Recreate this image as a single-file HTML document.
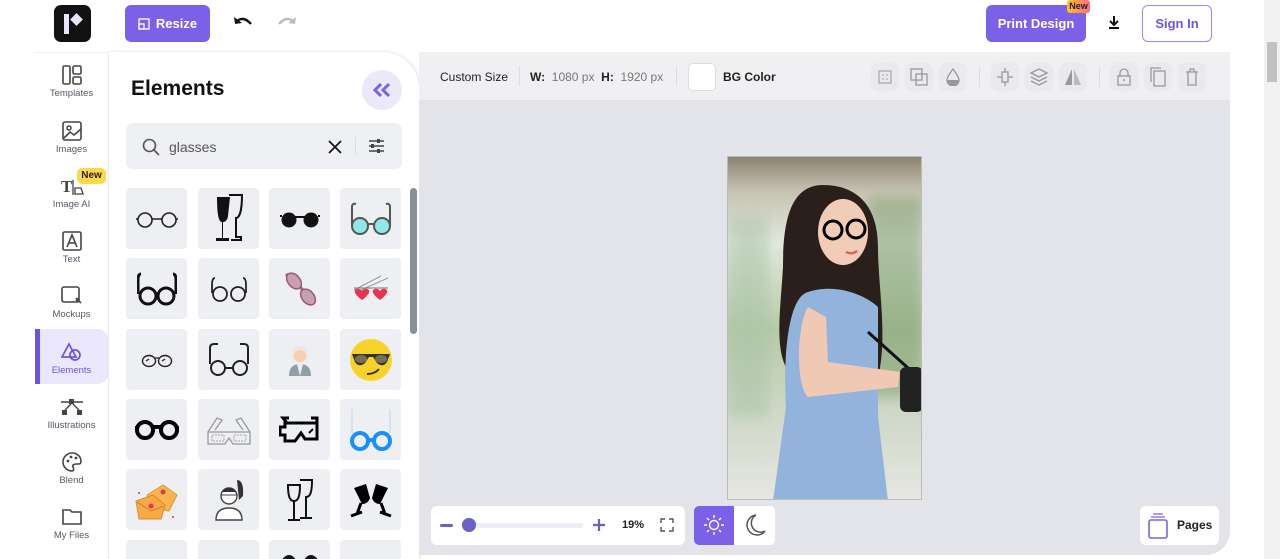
<!DOCTYPE html>
<html><head><meta charset="utf-8"><style>
*{box-sizing:border-box;margin:0;padding:0}
html{width:1280px;height:559px;overflow:hidden}
body{width:1280px;height:559px;overflow:hidden;background:#fff;font-family:"Liberation Sans",sans-serif;position:relative}
.abs{position:absolute}
.btn{position:absolute;border-radius:6px;display:flex;align-items:center;justify-content:center;font-weight:bold;font-size:13px}
.nav{position:absolute;left:35px;width:73px;text-align:center;font-size:9.5px;color:#555a66}
.nav svg{display:block;margin:0 auto 3px}
.cell{position:absolute;width:61px;height:61px;background:#eeeff3;border-radius:4px;display:flex;align-items:center;justify-content:center}
.tb{position:absolute;top:64px;width:26px;height:26px;border-radius:6px;background:#e9e9ee;box-shadow:0 0 2px #ddd;display:flex;align-items:center;justify-content:center}
</style></head><body>
<div class="abs" style="left:0;top:0;width:1280px;height:559px;overflow:hidden">
<!-- top bar -->
<div class="abs" style="left:54px;top:5px;width:37px;height:37px;background:#111;border-radius:7px"></div>
<div class="abs" style="left:64px;top:14px;width:5px;height:20px;background:#e8e4ff"></div>
<div class="abs" style="left:72px;top:15px;width:9px;height:9px;background:#e8e4ff;transform:rotate(45deg)"></div>
<div class="btn" style="left:125px;top:5px;width:85px;height:37px;background:#7b61e8;color:#fff">
<svg width="12" height="12" style="margin-right:6px"><rect x="1" y="1" width="10" height="10" fill="none" stroke="#fff" stroke-width="1.3"/><rect x="1" y="6" width="5" height="5" fill="none" stroke="#fff" stroke-width="1.3"/></svg>Resize</div>
<svg class="abs" style="left:232px;top:14px" width="22" height="16"><path d="M4 8 Q11 1 19 10" fill="none" stroke="#111" stroke-width="2.4"/><path d="M2 3 L3 10 L10 9" fill="#111"/></svg>
<svg class="abs" style="left:276px;top:14px" width="22" height="16"><path d="M18 8 Q11 1 3 10" fill="none" stroke="#bbb" stroke-width="2.4"/><path d="M20 3 L19 10 L12 9" fill="#bbb"/></svg>
<div class="btn" style="left:986px;top:5px;width:100px;height:37px;background:#7b61e8;color:#fff">Print Design</div>
<div class="abs" style="left:1067px;top:0;width:23px;height:13px;background:linear-gradient(90deg,#ffc21a,#ff6a8a);border-radius:3px;font-size:9px;font-weight:bold;text-align:center;line-height:13px;color:#222">New</div>
<svg class="abs" style="left:1107px;top:15px" width="14" height="16"><path d="M7 1 V10 M3 6 L7 10 L11 6 M2 13 H12" fill="none" stroke="#111" stroke-width="2"/></svg>
<div class="btn" style="left:1142px;top:5px;width:70px;height:37px;border:1.5px solid #9b87f0;color:#6c54e0">Sign In</div>
<!-- right scrollbar -->
<div class="abs" style="left:1264px;top:0;width:16px;height:559px;background:#f1f1f1"></div>
<div class="abs" style="left:1267px;top:42px;width:10px;height:40px;background:#c1c1c1"></div>
<!-- sidebar -->
<div class="abs" style="left:35px;top:52px;width:74px;height:507px;background:#fff;border-top:1px solid #eee;border-right:1px solid #eee"></div>
<div class="abs" style="left:35px;top:329px;width:74px;height:55px;background:#ebe7fd;border-radius:0 12px 12px 0;border-left:5px solid #6c54e0"></div>
<div class="nav" style="top:65px"><svg width="20" height="20"><rect x="1" y="1" width="7" height="18" rx="1.5" fill="none" stroke="#444" stroke-width="1.6"/><rect x="11" y="1" width="8" height="8" rx="1.5" fill="none" stroke="#444" stroke-width="1.6"/><rect x="11" y="12" width="8" height="7" rx="1.5" fill="none" stroke="#444" stroke-width="1.6"/></svg>Templates</div>
<div class="nav" style="top:121px"><svg width="20" height="20"><rect x="1" y="1" width="18" height="18" rx="2" fill="none" stroke="#444" stroke-width="1.6"/><circle cx="7" cy="7" r="2" fill="none" stroke="#444" stroke-width="1.5"/><path d="M2 17 L8 11 L12 14 L19 8" fill="none" stroke="#444" stroke-width="1.6"/></svg>Images</div>
<div class="nav" style="top:176px"><svg width="26" height="20"><text x="2" y="16" font-family="Liberation Serif" font-weight="bold" font-size="17" fill="#444">T</text><path d="M14 4 V19 M16 12 L22 12 L24 18 L16 18Z" fill="none" stroke="#444" stroke-width="1.3"/></svg>Image AI</div>
<div class="abs" style="left:77px;top:168px;width:29px;height:16px;background:#ffd84a;border-radius:5px;font-size:10px;font-weight:bold;text-align:center;line-height:16px;color:#222">New</div>
<div class="nav" style="top:231px"><svg width="20" height="20"><rect x="1" y="1" width="18" height="18" rx="1.5" fill="none" stroke="#444" stroke-width="1.6"/><path d="M5 16 L10 4 L15 16 M7 12 H13" fill="none" stroke="#444" stroke-width="1.6"/></svg>Text</div>
<div class="nav" style="top:286px"><svg width="22" height="20"><rect x="1" y="1" width="17" height="15" rx="2" fill="none" stroke="#444" stroke-width="1.6"/><path d="M15 12 L20 17 M18 12 L15 15" stroke="#444" stroke-width="1.6"/></svg>Mockups</div>
<div class="nav" style="top:342px;color:#6c54e0"><svg width="22" height="20"><path d="M8 2 L15 15 H1Z" fill="none" stroke="#6c54e0" stroke-width="1.7"/><circle cx="14" cy="13" r="5" fill="none" stroke="#6c54e0" stroke-width="1.7"/></svg>Elements</div>
<div class="nav" style="top:397px"><svg width="24" height="20"><rect x="9" y="2" width="5" height="5" fill="#444"/><rect x="2" y="13" width="5" height="5" fill="#444"/><rect x="17" y="13" width="5" height="5" fill="#444"/><path d="M1 5 H23 M11 7 L5 13 M13 7 L19 13" stroke="#444" stroke-width="1.4"/></svg>Illustrations</div>
<div class="nav" style="top:452px"><svg width="20" height="20"><path d="M10 1 A9 9 0 1 0 10 19 C12 19 12 16 11 15 C10 13 12 12 14 12 H17 C19 12 19 10 19 9 A9 8 0 0 0 10 1Z" fill="none" stroke="#444" stroke-width="1.6"/><circle cx="6" cy="9" r="1.4" fill="#444"/><circle cx="9" cy="5" r="1.4" fill="#444"/><circle cx="14" cy="6" r="1.4" fill="#444"/></svg>Blend</div>
<div class="nav" style="top:507px"><svg width="20" height="20"><path d="M1 3 H8 L10 5 H19 V17 H1Z" fill="none" stroke="#444" stroke-width="1.6"/></svg>My Files</div>
<!-- panel -->
<div class="abs" style="left:109px;top:52px;width:310px;height:507px;background:#fff;border-radius:0 36px 0 0;box-shadow:1px 0 3px #ddd"></div>
<div class="abs" style="left:131px;top:77px;font-size:21px;font-weight:bold;color:#111">Elements</div>
<div class="abs" style="left:362px;top:70px;width:40px;height:40px;border-radius:50%;background:#ebe8fa"></div>
<svg class="abs" style="left:372px;top:82px" width="20" height="16"><path d="M9 2 L3 8 L9 14 M17 2 L11 8 L17 14" fill="none" stroke="#7b61e8" stroke-width="3"/></svg>
<div class="abs" style="left:126px;top:123px;width:276px;height:46px;background:#eff0f3;border-radius:6px"></div>
<svg class="abs" style="left:142px;top:138px" width="18" height="18"><circle cx="7.5" cy="7.5" r="6" fill="none" stroke="#555" stroke-width="1.6"/><path d="M12 12 L17 17" stroke="#555" stroke-width="1.6"/></svg>
<div class="abs" style="left:169px;top:139px;font-size:14px;color:#555">glasses</div>
<svg class="abs" style="left:328px;top:140px" width="14" height="14"><path d="M1 1 L13 13 M13 1 L1 13" stroke="#111" stroke-width="1.7"/></svg>
<div class="abs" style="left:355px;top:137px;width:1px;height:18px;background:#ddd"></div>
<svg class="abs" style="left:368px;top:138px" width="17" height="16"><path d="M1 3 H16 M1 8 H16 M1 13 H16" stroke="#444" stroke-width="1.4"/><rect x="9" y="1" width="3" height="4" fill="#444"/><rect x="3" y="6" width="3" height="4" fill="#444"/><rect x="9" y="11" width="3" height="4" fill="#444"/></svg>
<div class="abs" style="left:410px;top:188px;width:7px;height:146px;background:#8a8f99;border-radius:4px"></div>
<!-- grid -->
<div class="cell" style="left:126px;top:188px"><svg width="44" height="20"><circle cx="10" cy="11" r="7" fill="none" stroke="#222" stroke-width="1.6"/><circle cx="34" cy="11" r="7" fill="none" stroke="#222" stroke-width="1.6"/><path d="M17 10 H27 M3 10 H1 M41 10 H43" stroke="#222" stroke-width="1.6"/></svg></div>
<div class="cell" style="left:198px;top:188px"><svg width="30" height="50"><path d="M3 3 H16 L14 22 C13 28 10 28 9 28 V44 H15 V47 H2 V44 H8 V28 C5 28 3 22 3 3Z" fill="#111"/><path d="M15 1 H28 C28 18 25 24 22 24 V43 H27 V46 H17" fill="none" stroke="#111" stroke-width="2"/></svg></div>
<div class="cell" style="left:269px;top:188px"><svg width="42" height="18"><circle cx="10" cy="10" r="7.5" fill="#111"/><circle cx="32" cy="10" r="7.5" fill="#111"/><path d="M16 7 H26 M1 6 H3 M39 6 H41" stroke="#111" stroke-width="2"/></svg></div>
<div class="cell" style="left:340px;top:188px"><svg width="48" height="40"><circle cx="13" cy="27" r="8" fill="#8fe7ea" stroke="#555" stroke-width="2"/><circle cx="35" cy="27" r="8" fill="#8fe7ea" stroke="#555" stroke-width="2"/><path d="M21 25 H27 M5 27 V8 Q5 4 9 5 M43 27 V8 Q43 4 39 5" fill="none" stroke="#555" stroke-width="2"/></svg></div>
<div class="cell" style="left:126px;top:258px"><svg width="40" height="34"><path d="M4 2 Q1 2 1 8 V22 M36 2 Q39 2 39 8 V22" fill="none" stroke="#111" stroke-width="3"/><circle cx="11" cy="24" r="8" fill="none" stroke="#111" stroke-width="3"/><circle cx="29" cy="24" r="8" fill="none" stroke="#111" stroke-width="3"/><path d="M18 22 H22" stroke="#111" stroke-width="3"/></svg></div>
<div class="cell" style="left:198px;top:258px"><svg width="38" height="28"><path d="M5 3 Q2 3 2 10 V18 M33 3 Q36 3 36 10 V18" fill="none" stroke="#222" stroke-width="1.8"/><circle cx="10" cy="19" r="7" fill="none" stroke="#222" stroke-width="1.8"/><circle cx="28" cy="19" r="7" fill="none" stroke="#222" stroke-width="1.8"/></svg></div>
<div class="cell" style="left:269px;top:258px"><svg width="40" height="40"><path d="M6 5 L22 20 L32 36" stroke="#9a6a7a" stroke-width="3" fill="none"/><ellipse cx="14" cy="12" rx="6" ry="9" transform="rotate(-40 14 12)" fill="#c9a0b0" stroke="#9a5a70" stroke-width="1.5"/><ellipse cx="28" cy="28" rx="6" ry="9" transform="rotate(-40 28 28)" fill="#c9a0b0" stroke="#9a5a70" stroke-width="1.5"/></svg></div>
<div class="cell" style="left:340px;top:258px"><svg width="40" height="30"><path d="M3 16 L30 2 M10 16 L37 4" stroke="#999" stroke-width="1"/><path d="M3 14 H37" stroke="#777"/><path d="M11 26 C3 20 2 16 6 15 C9 14 11 17 11 17 C11 17 13 14 16 15 C20 16 19 20 11 26Z M29 26 C21 20 20 16 24 15 C27 14 29 17 29 17 C29 17 31 14 34 15 C38 16 37 20 29 26Z" fill="#e8334f"/></svg></div>
<div class="cell" style="left:126px;top:329px"><svg width="32" height="16"><ellipse cx="8" cy="9" rx="6.5" ry="5.5" fill="none" stroke="#222" stroke-width="1.4"/><ellipse cx="24" cy="9" rx="6.5" ry="5.5" fill="none" stroke="#222" stroke-width="1.4"/><path d="M14 6 H18 M5 9 L8 7 M21 9 L24 7" stroke="#222" stroke-width="1.2"/></svg></div>
<div class="cell" style="left:198px;top:329px"><svg width="44" height="36"><path d="M7 2 Q3 2 3 6 V22 M37 2 Q41 2 41 6 V22" fill="none" stroke="#222" stroke-width="2"/><path d="M7 2 H11 M37 2 H33" stroke="#222" stroke-width="2"/><circle cx="11" cy="26" r="7" fill="none" stroke="#222" stroke-width="2"/><circle cx="33" cy="26" r="7" fill="none" stroke="#222" stroke-width="2"/><path d="M18 26 H26" stroke="#222" stroke-width="2"/></svg></div>
<div class="cell" style="left:269px;top:329px"><svg width="30" height="36"><circle cx="15" cy="12" r="8" fill="#f0e5df"/><circle cx="15" cy="14" r="6" fill="#f4cfb0"/><path d="M4 34 Q4 22 15 22 Q26 22 26 34Z" fill="#8fa0a6"/><path d="M12 22 L15 34 L18 22" fill="#eee"/></svg></div>
<div class="cell" style="left:340px;top:329px"><svg width="44" height="44"><circle cx="22" cy="22" r="21" fill="#f7d32a"/><path d="M3 16 H41 L38 24 Q34 30 28 25 L24 19 H20 L16 25 Q10 30 6 24Z" fill="#333"/><ellipse cx="12" cy="21" rx="6" ry="4" fill="#7a6e52"/><ellipse cx="32" cy="21" rx="6" ry="4" fill="#7a6e52"/><path d="M18 36 Q26 36 30 31" fill="none" stroke="#333" stroke-width="2"/></svg></div>
<div class="cell" style="left:126px;top:399px"><svg width="46" height="22"><circle cx="11" cy="11" r="8" fill="none" stroke="#000" stroke-width="4"/><circle cx="35" cy="11" r="8" fill="none" stroke="#000" stroke-width="4"/><path d="M18 8 H28 M1 9 H3 M43 9 H45" stroke="#000" stroke-width="4"/></svg></div>
<div class="cell" style="left:198px;top:399px"><svg width="48" height="36"><path d="M3 20 L12 6 L17 8 L10 18 M45 20 L36 6 L31 8 L38 18 M3 20 H45 V32 H28 L24 26 L20 32 H3Z" fill="none" stroke="#999" stroke-width="1.3"/><rect x="7" y="23" width="12" height="6" fill="none" stroke="#aaa" stroke-dasharray="2 1"/><rect x="29" y="23" width="12" height="6" fill="none" stroke="#aaa" stroke-dasharray="2 1"/></svg></div>
<div class="cell" style="left:269px;top:399px"><svg width="42" height="30"><path d="M10 3 H4 L8 8 M32 3 H38 V24 H26 L22 18 L16 26 H6 V20 H1 V12 H6 V8 H38" fill="none" stroke="#000" stroke-width="3"/><path d="M30 18 L34 14" stroke="#000" stroke-width="2"/></svg></div>
<div class="cell" style="left:340px;top:399px"><svg width="46" height="46"><path d="M4 2 V26 M42 2 V26" stroke="#d6e0f0" stroke-width="2"/><circle cx="12" cy="34" r="8" fill="none" stroke="#1a90ff" stroke-width="4"/><circle cx="34" cy="34" r="8" fill="none" stroke="#1a90ff" stroke-width="4"/><path d="M20 33 H26" stroke="#1a90ff" stroke-width="4"/></svg></div>
<div class="cell" style="left:126px;top:469px"><svg width="44" height="42"><path d="M12 16 L28 6 L42 16 L34 32 L16 28Z" fill="#f8b64c" stroke="#e0962e"/><path d="M1 22 L18 16 L30 26 L26 40 L4 40Z" fill="#f9a846" stroke="#e08a2e"/><path d="M2 23 L16 32 L29 27" fill="none" stroke="#d0802a"/><circle cx="16" cy="27" r="2.5" fill="#e8334f"/><circle cx="28" cy="13" r="2.5" fill="#e8334f"/><circle cx="4" cy="14" r="1" fill="#e8334f"/><circle cx="38" cy="38" r="1" fill="#e8334f"/></svg></div>
<div class="cell" style="left:198px;top:469px"><svg width="32" height="44"><path d="M24 2 Q31 2 30 18 L26 22Z" fill="#333"/><circle cx="16" cy="18" r="8" fill="#fff" stroke="#444" stroke-width="1.4"/><path d="M8 14 Q16 6 24 14 Z" fill="#333"/><path d="M3 42 Q3 30 16 30 Q29 30 29 42Z" fill="#fff" stroke="#444" stroke-width="1.4"/><path d="M8 17 H24" stroke="#444"/></svg></div>
<div class="cell" style="left:269px;top:469px"><svg width="30" height="46"><path d="M3 8 H15 C15 20 13 24 9 24 C5 24 3 20 3 8Z M9 24 V42 M3 43 H15 M15 3 H27 C27 16 25 20 21 20 V40 M15 41 H27" fill="none" stroke="#111" stroke-width="2"/></svg></div>
<div class="cell" style="left:340px;top:469px"><svg width="46" height="40"><path d="M6 8 L18 4 L22 18 Q20 24 14 24 Z M40 8 L28 4 L24 18 Q26 24 32 24Z" fill="#000"/><path d="M13 23 L9 34 M3 36 L14 32 M33 23 L37 34 M43 36 L32 32" stroke="#000" stroke-width="3"/></svg></div>
<div class="cell" style="left:126px;top:540px;height:19px;border-radius:4px 4px 0 0"></div><div class="cell" style="left:198px;top:540px;height:19px;border-radius:4px 4px 0 0"></div><div class="cell" style="left:269px;top:540px;height:19px;border-radius:4px 4px 0 0;align-items:flex-start"><svg width="40" height="19" style="margin-top:8px"><path d="M3 14 Q9 4 15 14 M25 14 Q31 4 37 14" stroke="#111" stroke-width="4" fill="none"/></svg></div><div class="cell" style="left:340px;top:540px;height:19px;border-radius:4px 4px 0 0"></div>
<!-- canvas -->
<div class="abs" style="left:419px;top:52px;width:811px;height:503px;background:#e3e4e9;border-radius:0 0 24px 0"></div>
<div class="abs" style="left:419px;top:52px;width:811px;height:48px;background:#f0f0f3"></div>
<div class="abs" style="left:440px;top:70px;font-size:12px;color:#222">Custom Size</div>
<div class="abs" style="left:519px;top:66px;width:1px;height:20px;background:#ddd"></div>
<div class="abs" style="left:530px;top:70px;font-size:12px;color:#777"><b style="color:#222">W:</b>&nbsp; 1080 px &nbsp;<b style="color:#222">H:</b>&nbsp; 1920 px</div>
<div class="abs" style="left:676px;top:66px;width:1px;height:20px;background:#ddd"></div>
<div class="abs" style="left:688px;top:63px;width:28px;height:28px;background:#fff;border:1px solid #ddd;border-radius:5px"></div>
<div class="abs" style="left:723px;top:70px;font-size:12px;font-weight:bold;color:#222">BG Color</div>
<div class="tb" style="left:872px"><svg width="14" height="14"><rect x="1" y="1" width="12" height="12" fill="none" stroke="#999"/><circle cx="5" cy="5" r=".8" fill="#999"/><circle cx="9" cy="9" r=".8" fill="#999"/><circle cx="5" cy="9" r=".8" fill="#999"/><circle cx="9" cy="5" r=".8" fill="#999"/></svg></div>
<div class="tb" style="left:906px"><svg width="18" height="18"><rect x="1" y="1" width="11" height="11" fill="none" stroke="#999" stroke-width="1.3"/><rect x="6" y="6" width="11" height="11" fill="none" stroke="#999" stroke-width="1.3"/></svg></div>
<div class="tb" style="left:940px"><svg width="14" height="18"><path d="M7 1 Q1 9 1 12 A6 6 0 0 0 13 12 Q13 9 7 1Z" fill="none" stroke="#999" stroke-width="1.3"/><path d="M1 12 A6 6 0 0 0 13 12Z" fill="#999"/></svg></div>
<div class="abs" style="left:979px;top:67px;width:1px;height:20px;background:#ddd"></div>
<div class="tb" style="left:992px"><svg width="18" height="20"><path d="M9 1 V19 M1 10 H17" stroke="#999" stroke-width="1.3"/><rect x="6" y="5" width="6" height="10" fill="#e9e9ee" stroke="#999" stroke-width="1.3"/></svg></div>
<div class="tb" style="left:1026px"><svg width="18" height="18"><path d="M9 1 L17 5 L9 9 L1 5Z M1 9 L9 13 L17 9 M1 13 L9 17 L17 13" fill="none" stroke="#999" stroke-width="1.3"/></svg></div>
<div class="tb" style="left:1060px"><svg width="18" height="18"><path d="M8 1 V17 H1Z" fill="#999"/><path d="M10 1 V17 H17Z" fill="#bbb"/></svg></div>
<div class="abs" style="left:1099px;top:67px;width:1px;height:20px;background:#ddd"></div>
<div class="tb" style="left:1111px"><svg width="14" height="18"><path d="M3 8 V5 A4 4 0 0 1 11 5 V8" fill="none" stroke="#999" stroke-width="1.3"/><rect x="1" y="8" width="12" height="9" fill="none" stroke="#999" stroke-width="1.3"/><circle cx="7" cy="12" r="1" fill="#999"/></svg></div>
<div class="tb" style="left:1145px"><svg width="16" height="20"><rect x="4" y="4" width="11" height="15" fill="none" stroke="#999" stroke-width="1.3"/><path d="M1 15 V1 H11" fill="none" stroke="#999" stroke-width="1.3"/></svg></div>
<div class="tb" style="left:1179px"><svg width="14" height="18"><path d="M1 4 H13 M5 4 V1 H9 V4 M3 4 V17 H11 V4" fill="none" stroke="#999" stroke-width="1.3"/></svg></div>
<!-- photo -->
<svg class="abs" style="left:727px;top:156px;border:1px solid #bbb;background:#d8e0d2" width="195" height="344">
<defs><linearGradient id="bg" x1="0" y1="0" x2="0" y2="1"><stop offset="0" stop-color="#8d8272"/><stop offset=".1" stop-color="#c7c3b2"/><stop offset=".25" stop-color="#dfe8dc"/><stop offset=".5" stop-color="#b7caa8"/><stop offset=".75" stop-color="#cfd8c8"/><stop offset="1" stop-color="#e6e7e2"/></linearGradient>
<filter id="b"><feGaussianBlur stdDeviation="6"/></filter></defs>
<rect width="195" height="344" fill="url(#bg)"/>
<rect x="140" y="40" width="55" height="200" fill="#7d9a6b" opacity=".5" filter="url(#b)"/>
<rect x="0" y="60" width="40" height="200" fill="#a9c3a6" opacity=".5" filter="url(#b)"/>
<path d="M95 28 C60 28 55 70 55 110 C52 160 45 200 65 220 L150 220 C160 180 150 130 150 90 C150 50 130 28 95 28Z" fill="#2a1f1a"/>
<ellipse cx="115" cy="75" rx="25" ry="33" fill="#f1cdb8"/>
<circle cx="105" cy="73" r="9" fill="none" stroke="#000" stroke-width="3"/>
<circle cx="128" cy="72" r="9" fill="none" stroke="#000" stroke-width="3"/>
<path d="M118 95 Q124 98 129 94" stroke="#d56a5a" stroke-width="2.5" fill="none"/>
<path d="M80 135 C60 140 55 200 58 250 L45 344 L160 344 L150 260 L150 150 C140 140 110 125 80 135Z" fill="#92b3dc"/>
<path d="M80 150 C68 170 68 230 80 240 L170 230 L172 215 L100 205 L98 160Z" fill="#efc9b3"/>
<path d="M140 175 L190 220" stroke="#111" stroke-width="3"/>
<rect x="172" y="210" width="23" height="45" rx="6" fill="#222"/>
</svg>
<!-- bottom controls -->
<div class="abs" style="left:431px;top:506px;width:254px;height:39px;background:#fff;border-radius:6px"></div>
<div class="abs" style="left:440px;top:524px;width:13px;height:3px;background:#6c5fc7;border-radius:2px"></div>
<div class="abs" style="left:463px;top:523px;width:120px;height:5px;background:#eceef4;border-radius:3px"></div>
<div class="abs" style="left:462px;top:518px;width:14px;height:14px;background:#6c5fc7;border-radius:50%"></div>
<svg class="abs" style="left:592px;top:518px" width="14" height="14"><path d="M7 1 V13 M1 7 H13" stroke="#6c5fc7" stroke-width="2.2"/></svg>
<div class="abs" style="left:622px;top:519px;font-size:11px;font-weight:bold;color:#222">19%</div>
<svg class="abs" style="left:660px;top:518px" width="14" height="14"><path d="M1 5 V1 H5 M9 1 H13 V5 M13 9 V13 H9 M5 13 H1 V9" fill="none" stroke="#555" stroke-width="1.4"/></svg>
<div class="abs" style="left:694px;top:506px;width:81px;height:39px;background:#fff;border-radius:5px;overflow:hidden"><div style="width:40px;height:39px;background:#7b61e8"></div></div>
<svg class="abs" style="left:703px;top:514px" width="22" height="22"><circle cx="11" cy="11" r="4.5" fill="none" stroke="#fff" stroke-width="1.4"/><path d="M11 1 V4 M11 18 V21 M1 11 H4 M18 11 H21 M4 4 L6 6 M16 16 L18 18 M4 18 L6 16 M16 6 L18 4" stroke="#fff" stroke-width="1.4"/></svg>
<svg class="abs" style="left:744px;top:513px" width="22" height="24"><path d="M12 2 A10 10 0 1 0 21 18 A9 9 0 0 1 12 2Z" fill="none" stroke="#555" stroke-width="1.5"/></svg>
<div class="abs" style="left:1140px;top:506px;width:79px;height:39px;background:#fff;border-radius:6px"></div>
<svg class="abs" style="left:1147px;top:512px" width="22" height="28"><path d="M6 2 H16 M4 5 H18" stroke="#7b61e8" stroke-width="1.3"/><rect x="2" y="8" width="18" height="18" rx="2" fill="none" stroke="#7b61e8" stroke-width="1.6"/></svg>
<div class="abs" style="left:1177px;top:518px;font-size:12px;font-weight:bold;color:#222">Pages</div>
</div>
</body></html>
